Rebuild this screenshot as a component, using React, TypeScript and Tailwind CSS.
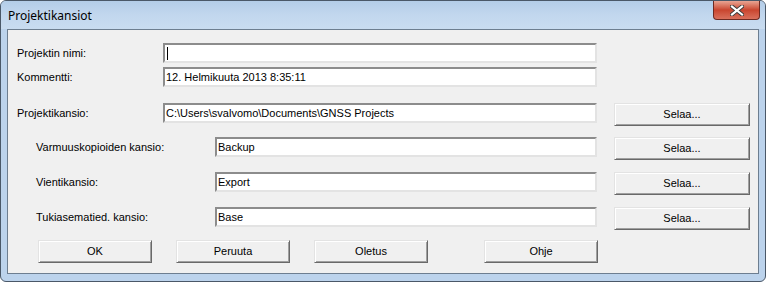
import React from 'react';

const FONT = { fontFamily: '"Liberation Sans", Arial, sans-serif' };

type FieldProps = { value?: string; caret?: boolean; w: string };

function Field({ value, caret, w }: FieldProps) {
  return (
    <div
      className={`${w} h-[20px] bg-white border-2 border-t-[#8c8c8c] border-l-[#8c8c8c] border-r-[#e3e3e3] border-b-[#e3e3e3] flex items-center pl-px text-[11px] text-black whitespace-nowrap overflow-hidden`}
    >
      {caret && <span className="w-px h-[13px] bg-black ml-px" />}
      {value}
    </div>
  );
}

function Btn({ label, w = 'w-[136px]' }: { label: string; w?: string }) {
  return (
    <button
      className={`${w} h-[23px] bg-[#f0f0f0] border border-t-[#e3e3e3] border-l-[#e3e3e3] border-r-[#696969] border-b-[#696969] shadow-[inset_1px_1px_0_#ffffff,inset_-1px_-1px_0_#a0a0a0] text-[11px] text-black flex items-center justify-center`}
    >
      {label}
    </button>
  );
}

const rows = [
  { label: 'Varmuuskopioiden kansio:', value: 'Backup', mt: 'mt-[11px]' },
  { label: 'Vientikansio:', value: 'Export', mt: 'mt-[12px]' },
  { label: 'Tukiasematied. kansio:', value: 'Base', mt: 'mt-[12px]' },
];

export default function App() {
  return (
    <div className="w-[766px] h-[282px] bg-white">
      <div className="w-[766px] h-[282px] rounded-[6px] border border-[#4a5868] bg-[#bcd3ec] flex flex-col overflow-hidden">
        {/* title bar */}
        <div className="h-[28px] flex items-start bg-gradient-to-b from-[#b3cde8] via-[#c2d7ee] to-[#c9dcf0]">
          <span
            className="ml-[7px] mt-[6px] text-[12px] text-black"
            style={{ fontFamily: '"Noto Sans", "Open Sans", sans-serif' }}
          >
            Projektikansiot
          </span>
          <div className="ml-auto mr-[5px] w-[47px] h-[19px] rounded-b-[4px] border border-t-0 border-[#6e2a22] bg-gradient-to-b from-[#e8a493] via-[#c9452f] to-[#d9705c] flex items-center justify-center">
            <svg width="14" height="11" viewBox="0 0 14 11">
              <path d="M2 1.5 L12 9.5 M12 1.5 L2 9.5" stroke="#3b3b3b" strokeWidth="4" strokeLinecap="square" />
              <path d="M2 1.5 L12 9.5 M12 1.5 L2 9.5" stroke="#ffffff" strokeWidth="2.2" strokeLinecap="square" />
            </svg>
          </div>
        </div>

        {/* client area */}
        <div className="mx-[6px] h-[245px] border border-[#6d7e90] bg-[#f0f0f0] text-[11px] text-black" style={FONT}>
          <div className="mt-[13px] flex pl-[9px]">
            <div className="w-[146px] h-[20px] flex items-center">Projektin nimi:</div>
            <Field w="w-[434px]" caret />
          </div>
          <div className="mt-[4px] flex pl-[9px]">
            <div className="w-[146px] h-[20px] flex items-center">Kommentti:</div>
            <Field w="w-[434px]" value="12. Helmikuuta 2013 8:35:11" />
          </div>
          <div className="mt-[16px] flex pl-[9px] h-[23px]">
            <div className="w-[146px] h-[20px] flex items-center">Projektikansio:</div>
            <Field w="w-[434px]" value="C:\Users\svalvomo\Documents\GNSS Projects" />
            <div className="ml-[17px]">
              <Btn label="Selaa..." />
            </div>
          </div>
          {rows.map((r) => (
            <div key={r.label} className={`${r.mt} flex pl-[28px] h-[23px]`}>
              <div className="w-[179px] h-[20px] flex items-center">{r.label}</div>
              <Field w="w-[382px]" value={r.value} />
              <div className="ml-[17px]">
                <Btn label="Selaa..." />
              </div>
            </div>
          ))}
          <div className="mt-[10px] flex pl-[30px] gap-[24px]">
            <Btn label="OK" w="w-[114px]" />
            <Btn label="Peruuta" w="w-[114px]" />
            <Btn label="Oletus" w="w-[114px]" />
            <div className="ml-[32px]">
              <Btn label="Ohje" w="w-[114px]" />
            </div>
          </div>
        </div>
      </div>
    </div>
  );
}
